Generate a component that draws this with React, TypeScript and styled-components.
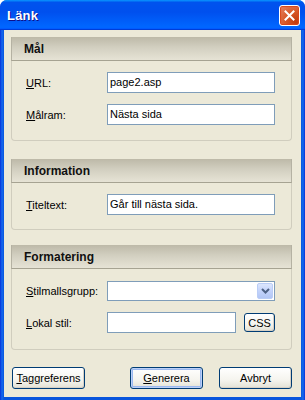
import React from "react";
import styled, { createGlobalStyle } from "styled-components";

const Global = createGlobalStyle`
  html, body { margin: 0; padding: 0; background: #ffffff; }
  body { font-family: "Liberation Sans", Arial, sans-serif; font-size: 11px; color: #000; }
  * { box-sizing: border-box; }
`;

const Window = styled.div`
  width: 305px;
  height: 400px;
  display: flex;
  flex-direction: column;
  background: linear-gradient(90deg, #0831d9 0px, #166aee 2px, #0855dd 4px, #0855dd 301px, #166aee 303px, #0831d9 305px);
  border-radius: 7px 7px 0 0;
  overflow: hidden;
`;

const TitleBar = styled.div`
  height: 30px;
  flex: none;
  display: flex;
  align-items: center;
  justify-content: space-between;
  padding: 0 5px 0 7px;
  background: linear-gradient(180deg, #0997ff, #0053ee 8%, #0050ee 40%, #0066ff 88%, #0066ff 93%, #005bff 95%, #003dd7 96%, #003dd7);
`;

const Title = styled.span`
  font-family: "Liberation Sans", Arial, sans-serif;
  font-weight: bold;
  font-size: 13px;
  color: #ffffff;
  text-shadow: 1px 1px 0 #0f1089;
  letter-spacing: 0.2px;
  margin-top: 1px;
`;

const CloseButton = styled.div`
  width: 21px;
  height: 21px;
  flex: none;
  display: flex;
  align-items: center;
  justify-content: center;
  border: 1px solid #ffffff;
  border-radius: 3px;
  background: radial-gradient(circle at 85% 85%, #c13a0c 0%, #d85a2a 50%, #e5876a 100%);
  box-shadow: inset 0 0 1px 1px #d9461a;
  margin-top: 1px;
`;

const Frame = styled.div`
  flex: 1;
  display: flex;
  padding: 0 4px 3px 4px;
`;

const Client = styled.div`
  flex: 1;
  display: flex;
  flex-direction: column;
  background: #ece9d8;
  padding: 7px 9px 0 7px;
`;

const Group = styled.section<{ $top: number }>`
  margin-top: ${(p) => p.$top}px;
  border: 1px solid #d0cdbe;
  border-top: none;
  border-radius: 0 0 4px 4px;
`;

const GroupHeader = styled.div`
  height: 24px;
  display: flex;
  align-items: center;
  padding-left: 12px;
  font-weight: bold;
  font-size: 12px;
  color: #101010;
  border: 1px solid #b5b2a3;
  border-top: none;
  margin: 0 -1px;
  background: linear-gradient(180deg, #bdb9a8 0%, #d2cfc0 45%, #e6e3d5 100%);
  border-bottom: 1px solid #a6a392;
`;

const GroupBody = styled.div<{ $pt: number; $pb: number }>`
  display: grid;
  grid-template-columns: 81px 1fr;
  row-gap: 11px;
  align-items: center;
  padding: ${(p) => p.$pt}px 16px ${(p) => p.$pb}px 14px;
`;

const Label = styled.label`
  font-size: 11px;
  color: #000;
  white-space: nowrap;
`;

const Key = styled.span`
  text-decoration: underline;
  text-underline-offset: 1px;
`;

const TextBox = styled.input<{ $h?: number }>`
  height: ${(p) => p.$h ?? 21}px;
  width: 100%;
  min-width: 0;
  flex: 1;
  border: 1px solid #7f9db9;
  background: #ffffff;
  padding: 0 2px 1px 2px;
  font-family: "Liberation Sans", Arial, sans-serif;
  font-size: 11px;
  color: #000;
  outline: none;
  margin: 0;
`;

const Combo = styled.div`
  height: 20px;
  border: 1px solid #7f9db9;
  background: #ffffff;
  display: flex;
  justify-content: flex-end;
  padding: 1px;
`;

const ComboButton = styled.div`
  width: 16px;
  height: 16px;
  border-radius: 2px;
  border: 1px solid #bacdf6;
  background: linear-gradient(180deg, #dce6fd 0%, #c3d3fb 50%, #b2c6f5 100%);
  display: flex;
  align-items: center;
  justify-content: center;
`;

const InlineRow = styled.div`
  display: flex;
  align-items: center;
  gap: 8px;
`;

const Button = styled.button<{ $default?: boolean; $w?: number; $h?: number }>`
  flex: none;
  width: ${(p) => p.$w ?? 73}px;
  height: ${(p) => p.$h ?? 22}px;
  border: 1px solid #003c74;
  border-radius: 3px;
  background: linear-gradient(180deg, #ffffff 0%, #f5f4ee 60%, #e3e1d5 100%);
  box-shadow: ${(p) =>
    p.$default
      ? "inset 0 0 0 1px #bcd0f7, inset 0 0 0 2px #9ab8f0"
      : "inset -1px -1px 0 #d6d0c5"};
  font-family: "Liberation Sans", Arial, sans-serif;
  font-size: 11px;
  color: #000;
  padding: 0;
  margin: 0;
  display: flex;
  align-items: center;
  justify-content: center;
`;

const Footer = styled.div`
  display: flex;
  align-items: center;
  margin-top: 17px;
  padding-left: 1px;
`;

const Spacer = styled.div`
  flex: 1;
`;

const ButtonGap = styled.div`
  width: 16px;
`;

export default function App() {
  return (
    <>
      <Global />
      <Window>
        <TitleBar>
          <Title>Länk</Title>
          <CloseButton>
            <svg width="11" height="11" viewBox="0 0 11 11">
              <path d="M1.5 1.5 L9.5 9.5 M9.5 1.5 L1.5 9.5" stroke="#ffffff" strokeWidth="2" strokeLinecap="square" />
            </svg>
          </CloseButton>
        </TitleBar>
        <Frame>
          <Client>
            <Group $top={0}>
              <GroupHeader>Mål</GroupHeader>
              <GroupBody $pt={11} $pb={15}>
                <Label>
                  <Key>U</Key>RL:
                </Label>
                <TextBox defaultValue="page2.asp" />
                <Label>
                  <Key>M</Key>ålram:
                </Label>
                <TextBox defaultValue="Nästa sida" />
              </GroupBody>
            </Group>
            <Group $top={18}>
              <GroupHeader>Information</GroupHeader>
              <GroupBody $pt={11} $pb={14}>
                <Label>
                  <Key>T</Key>iteltext:
                </Label>
                <TextBox defaultValue="Går till nästa sida." />
              </GroupBody>
            </Group>
            <Group $top={15}>
              <GroupHeader>Formatering</GroupHeader>
              <GroupBody $pt={12} $pb={16}>
                <Label>
                  <Key>S</Key>tilmallsgrupp:
                </Label>
                <Combo>
                  <ComboButton>
                    <svg width="9" height="6" viewBox="0 0 9 6">
                      <path d="M1 1 L4.5 4.5 L8 1" stroke="#4d6185" strokeWidth="2" fill="none" />
                    </svg>
                  </ComboButton>
                </Combo>
                <Label>
                  <Key>L</Key>okal stil:
                </Label>
                <InlineRow>
                  <TextBox />
                  <Button $w={31} $h={19}>CSS</Button>
                </InlineRow>
              </GroupBody>
            </Group>
            <Footer>
              <Button>
                <span>
                  <Key>T</Key>aggreferens
                </span>
              </Button>
              <Spacer />
              <Button $default>
                <span>
                  <Key>G</Key>enerera
                </span>
              </Button>
              <ButtonGap />
              <Button>Avbryt</Button>
            </Footer>
          </Client>
        </Frame>
      </Window>
    </>
  );
}
